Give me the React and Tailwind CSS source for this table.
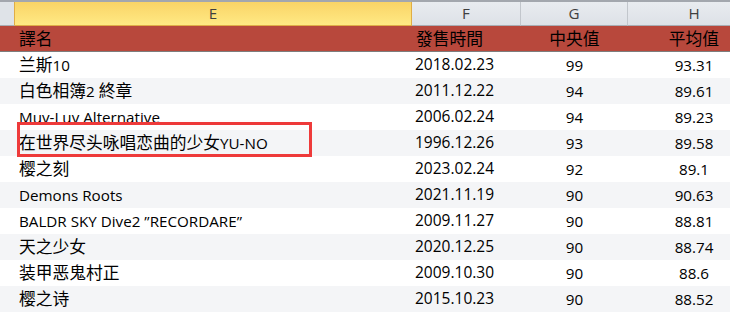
import React from 'react';

const rows = [
  { name: '兰斯10', date: '2018.02.23', median: '99', avg: '93.31' },
  { name: '白色相簿2 終章', date: '2011.12.22', median: '94', avg: '89.61' },
  { name: 'Muv-Luv Alternative', date: '2006.02.24', median: '94', avg: '89.23' },
  { name: '在世界尽头咏唱恋曲的少女YU-NO', date: '1996.12.26', median: '93', avg: '89.58' },
  { name: '樱之刻', date: '2023.02.24', median: '92', avg: '89.1' },
  { name: 'Demons Roots', date: '2021.11.19', median: '90', avg: '90.63' },
  { name: 'BALDR SKY Dive2 ”RECORDARE”', date: '2009.11.27', median: '90', avg: '88.81' },
  { name: '天之少女', date: '2020.12.25', median: '90', avg: '88.74' },
  { name: '装甲恶鬼村正', date: '2009.10.30', median: '90', avg: '88.6' },
  { name: '樱之诗', date: '2015.10.23', median: '90', avg: '88.52' },
];

const font = "font-['Open_Sans','Noto_Sans_CJK_SC',sans-serif]";

// CJK glyphs in the sheet are a bit larger than the latin text
const Mixed = ({ text }) => (
  <span className="whitespace-pre">
    {text.split(/([\u3000-\u9fff\uff00-\uffef]+)/).map((part, i) =>
      /[\u3000-\u9fff\uff00-\uffef]/.test(part) ? (
        <span key={i} className="text-[16.75px]">{part}</span>
      ) : (
        <span key={i}>{part}</span>
      )
    )}
  </span>
);

const App = () => {
  return (
    <div className={`relative w-[730px] h-[315px] overflow-hidden bg-white text-[15.2px] text-black ${font}`}>
      {/* column letters */}
      <div className="flex h-[26px] border-t-2 border-[#a3a7ae] text-[#3f3f3f]">
        <div className="w-[15px] shrink-0 bg-[#dfe3e8] border-r border-b border-r-[#e0ad46] border-b-[#a9adb3]" />
        <div className="w-[397px] shrink-0 flex items-center justify-center bg-gradient-to-b from-[#f9d466] to-[#ffe984] border-r border-b border-[#e0ad46]">
          E
        </div>
        <div className="w-[109px] shrink-0 flex items-center justify-center bg-gradient-to-b from-[#e9ecf0] to-[#dde1e7] border-r border-b border-r-[#c2c6cc] border-b-[#a9adb3]">
          F
        </div>
        <div className="w-[107px] shrink-0 flex items-center justify-center bg-gradient-to-b from-[#e9ecf0] to-[#dde1e7] border-r border-b border-r-[#c2c6cc] border-b-[#a9adb3]">
          G
        </div>
        <div className="w-[132px] shrink-0 flex items-center justify-center bg-gradient-to-b from-[#e9ecf0] to-[#dde1e7] border-b border-b-[#a9adb3]">
          H
        </div>
      </div>

      {/* header row */}
      <div className="flex h-[26px] bg-[#b8483c] border-b border-[#7d7d7d] text-[16.75px]">
        <div className="w-[15px] shrink-0" />
        <div className="w-[397px] shrink-0 flex items-center pl-[4px]">譯名</div>
        <div className="w-[109px] shrink-0 flex items-center pl-[4px]">發售時間</div>
        <div className="w-[107px] shrink-0 flex items-center justify-center">中央值</div>
        <div className="w-[132px] shrink-0 flex items-center justify-center">平均值</div>
      </div>

      {rows.map((row, i) => (
        <div
          key={row.name}
          className={`flex h-[26px] ${i % 2 === 1 ? 'bg-[#f4f5f7]' : 'bg-white'}`}
        >
          <div className="w-[15px] shrink-0" />
          <div className="w-[397px] shrink-0 flex items-center pl-[4px]">
            <Mixed text={row.name} />
          </div>
          <div className="w-[109px] shrink-0 flex items-center pl-[3px] text-[15.5px]">{row.date}</div>
          <div className="w-[107px] shrink-0 flex items-center justify-center">{row.median}</div>
          <div className="w-[132px] shrink-0 flex items-center justify-center">{row.avg}</div>
        </div>
      ))}

      {/* annotation box */}
      <div className="absolute left-[17px] top-[122px] w-[295px] h-[35px] border-[3px] border-[#ee3a3a]" />
    </div>
  );
};

export default App;
